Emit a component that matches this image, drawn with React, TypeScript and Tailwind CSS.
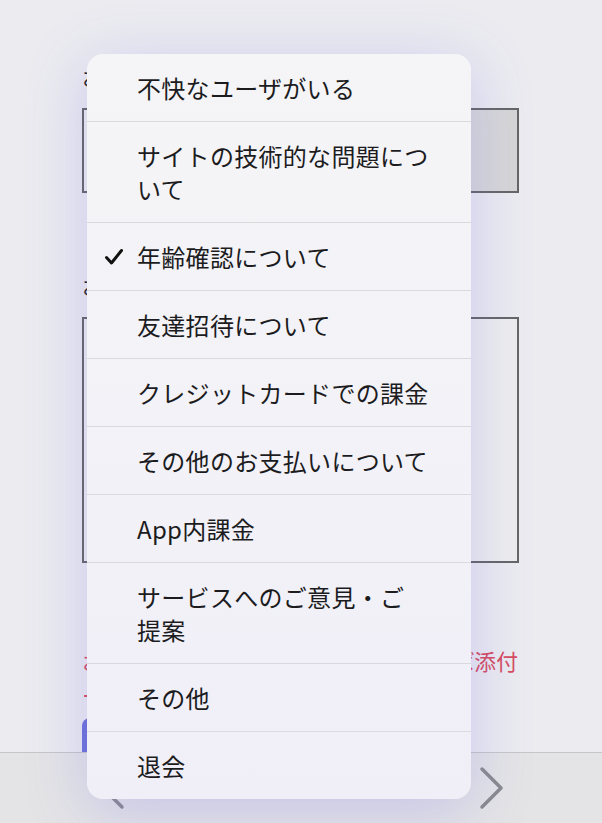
import React from "react";

const items: { lines: string[]; checked?: boolean }[] = [
  { lines: ["不快なユーザがいる"] },
  { lines: ["サイトの技術的な問題につ", "いて"] },
  { lines: ["年齢確認について"], checked: true },
  { lines: ["友達招待について"] },
  { lines: ["クレジットカードでの課金"] },
  { lines: ["その他のお支払いについて"] },
  { lines: ["App内課金"] },
  { lines: ["サービスへのご意見・ご", "提案"] },
  { lines: ["その他"] },
  { lines: ["退会"] },
];

const jp = "font-['Hiragino_Sans','Noto_Sans_CJK_JP',sans-serif]";

function Check() {
  return (
    <svg width="20" height="18" viewBox="0 0 20 18" className="absolute left-[17px] top-1/2 -translate-y-1/2">
      <path d="M2.5 9.5 L7.5 15 L17.5 2.5" fill="none" stroke="#111" strokeWidth="3" strokeLinecap="round" strokeLinejoin="round" />
    </svg>
  );
}

function Menu() {
  return (
    <div className="absolute left-[87px] top-[54px] w-[384px] overflow-hidden rounded-[16px] bg-gradient-to-b from-[#f5f5f7] to-[#f0eff8] shadow-[0_12px_60px_rgba(110,100,230,0.26)]">
      {items.map((it, i) => (
        <div
          key={i}
          className={`relative py-[17px] pl-[50px] pr-[30px] ${i > 0 ? "border-t border-[#d9d9de]" : ""}`}
        >
          {it.checked && <Check />}
          {it.lines.map((l) => (
            <div key={l} className={`${jp} text-[24px] leading-[33px] tracking-[0.3px] text-[#1c1c1e] whitespace-nowrap`}>
              {l}
            </div>
          ))}
        </div>
      ))}
    </div>
  );
}

export default function App() {
  return (
    <div className="relative h-[823px] w-[602px] overflow-hidden bg-[#ebebf0]">
      <div className={`flex h-[752px] flex-col pl-[82px] ${jp}`}>
        <div className="mt-[63px] w-[437px] text-[21px] leading-[26px] text-[#222]">お問い合わせ種別</div>
        <div className="mt-[19px] h-[85px] w-[437px] border-2 border-[#666] bg-gradient-to-r from-[#eeeeee] to-[#d6d6d6]" />
        <div className="mt-[79px] w-[437px] text-[21px] leading-[26px] text-[#222]">お問い合わせ内容</div>
        <div className="mt-[19px] h-[246px] w-[437px] border-2 border-[#666] bg-[#ededee]" />
        <div className="mt-[81px] w-[437px] whitespace-nowrap text-[21.8px] leading-[34px] text-[#d64c5f]">
          お問い合わせ内容に関する画像があれば添付
        </div>
        <div className="w-[437px] whitespace-nowrap text-[21.8px] leading-[34px] text-[#d64c5f]">
          ーしてください。
        </div>
        <div className="mt-auto h-[34px] w-[200px] rounded-tl-[8px] bg-[#6d72d8]" />
      </div>
      <div className="flex h-[71px] items-center justify-between border-t border-[#c6c6c8] bg-[#e4e4e6] pl-[98px] pr-[96px]">
        <svg width="28" height="44" viewBox="0 0 28 44">
          <path d="M24 3 L5 22 L24 41" fill="none" stroke="#8a8a8e" strokeWidth="3.5" strokeLinecap="round" strokeLinejoin="round" />
        </svg>
        <svg width="28" height="44" viewBox="0 0 28 44">
          <path d="M4 3 L23 22 L4 41" fill="none" stroke="#8a8a8e" strokeWidth="3.5" strokeLinecap="round" strokeLinejoin="round" />
        </svg>
      </div>
      <Menu />
    </div>
  );
}
